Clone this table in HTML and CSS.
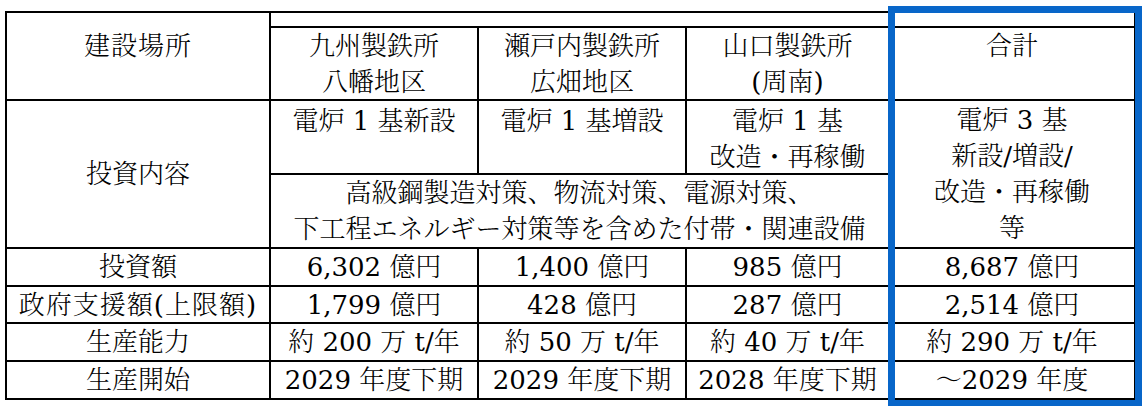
FILE: index.html
```html
<!DOCTYPE html>
<html lang="ja">
<head>
<meta charset="utf-8">
<title>電炉投資計画</title>
<link rel="stylesheet" href="styles.css">
</head>
<body>
<div class="page">
  <div class="grid">
    <div class="cell r2 head">建設場所</div>
    <div class="cell c4"></div>
    <div class="cell top">九州製鉄所<br>八幡地区</div>
    <div class="cell top">瀬戸内製鉄所<br>広畑地区</div>
    <div class="cell top">山口製鉄所<br>(周南)</div>
    <div class="cell top">合計</div>

    <div class="cell r2">投資内容</div>
    <div class="cell top pt">電炉 1 基新設</div>
    <div class="cell top pt">電炉 1 基増設</div>
    <div class="cell top pt">電炉 1 基<br>改造・再稼働</div>
    <div class="cell r2">電炉 3 基<br>新設/増設/<br>改造・再稼働<br>等</div>
    <div class="cell c3">高級鋼製造対策、物流対策、電源対策、<br>下工程エネルギー対策等を含めた付帯・関連設備</div>

    <div class="cell">投資額</div>
    <div class="cell">6,302 億円</div>
    <div class="cell">1,400 億円</div>
    <div class="cell">985 億円</div>
    <div class="cell">8,687 億円</div>

    <div class="cell tight">政府支援額(上限額)</div>
    <div class="cell">1,799 億円</div>
    <div class="cell">428 億円</div>
    <div class="cell">287 億円</div>
    <div class="cell">2,514 億円</div>

    <div class="cell">生産能力</div>
    <div class="cell">約 200 万 t/年</div>
    <div class="cell">約 50 万 t/年</div>
    <div class="cell">約 40 万 t/年</div>
    <div class="cell">約 290 万 t/年</div>

    <div class="cell">生産開始</div>
    <div class="cell">2029 年度下期</div>
    <div class="cell">2029 年度下期</div>
    <div class="cell">2028 年度下期</div>
    <div class="cell">～2029 年度</div>
  </div>
  <div class="highlight"></div>
</div>
</body>
</html>
```
FILE: styles.css
```css
html, body {
  margin: 0;
  padding: 0;
  background: #ffffff;
}

.page {
  position: relative;
  width: 1142px;
  height: 406px;
  overflow: hidden;
  padding: 11px 0 0 5px;
  box-sizing: border-box;
  font-family: "DejaVu Serif", "Noto Serif CJK JP", "Noto Sans CJK JP", serif;
  font-size: 26px;
  font-weight: 300;
  line-height: 36px;
  color: #000000;
}

.grid {
  display: grid;
  grid-template-columns: 262px 206px 206px 201px 244px;
  grid-template-rows: 13px 71px 72px 72px 36px 35px 36px 36px;
  gap: 2px;
  padding: 2px;
  background: #000000;
  width: max-content;
}

.cell {
  background: #ffffff;
  display: flex;
  flex-direction: column;
  justify-content: center;
  align-items: center;
  text-align: center;
  white-space: nowrap;
  overflow: hidden;
}

.r2 { grid-row: span 2; }
.c3 { grid-column: span 3; }
.c4 { grid-column: span 4; }

.top { justify-content: flex-start; }
.pt { padding-top: 2px; }
.head { justify-content: flex-start; padding-top: 15px; letter-spacing: 1px; }
.tight { letter-spacing: 1px; }

.highlight {
  position: absolute;
  left: 888px;
  top: 6px;
  width: 254px;
  height: 401px;
  box-sizing: border-box;
  border: 7px solid #0866c9;
}
```
